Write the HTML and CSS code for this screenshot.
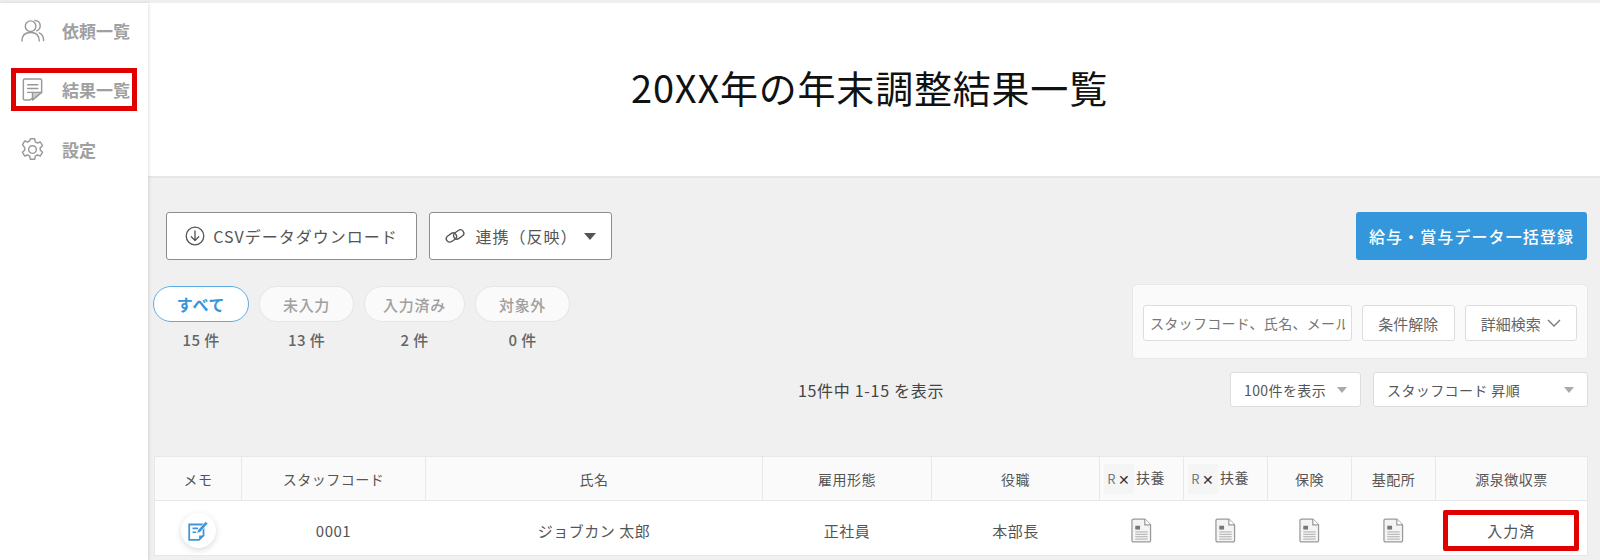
FILE: index.html
```html
<!DOCTYPE html>
<html lang="ja">
<head>
    <meta charset="UTF-8">
    <title>年末調整結果一覧</title>
    <link rel="stylesheet" href="styles.css">
</head>
<body>
    <div class="app">
        <!-- Sidebar -->
        <nav class="sidebar">
            <a class="nav-item">
                <svg class="nav-icon" viewBox="0 0 26 26" fill="none" stroke="#999" stroke-width="1.5" stroke-linecap="round">
                    <circle cx="11" cy="8.5" r="5.5"/>
                    <path d="M2 24c0-6 3.5-9 9-9s9 3 9 9"/>
                    <path d="M15.5 2.5c3.5 0 5.5 2.5 5.5 5.5 0 2.500-1.500 4.500-3.500 5.300"/>
                    <path d="M20 15.500c2.800 1 4.500 4 4.500 8"/>
                </svg>
                <span>依頼一覧</span>
            </a>
            <a class="nav-item nav-marked">
                <svg class="nav-icon" viewBox="0 0 26 26" fill="none" stroke="#999" stroke-width="1.5" stroke-linejoin="round" stroke-linecap="round">
                    <path d="M10 24H5a1.500 1.500 0 0 1-1.500-1.500v-19A1.500 1.500 0 0 1 5 2h16a1.500 1.500 0 0 1 1.500 1.500V16z"/>
                    <path d="M8 8h10.500M8 12h10.500M8 16h5"/>
                    <path d="M22.500 16H13v8z" fill="#ccc"/>
                </svg>
                <span>結果一覧</span>
            </a>
            <a class="nav-item">
                <svg class="nav-icon" viewBox="0 0 26 26" fill="none" stroke="#999" stroke-width="1.500" stroke-linejoin="round">
                    <circle cx="13" cy="13" r="4"/>
                    <path d="M10.800 1.800h4.400l.8 3.300 2 1.100 3.200-1 2.200 3.800-2.400 2.300v2.300l2.400 2.300-2.200 3.800-3.200-1-2 1.100-.8 3.300h-4.400l-.8-3.300-2-1.100-3.200 1-2.200-3.800 2.400-2.300v-2.300L2.600 8 4.800 4.200l3.200 1 2-1.100z"/>
                </svg>
                <span>設定</span>
            </a>
        </nav>

        <main class="main">
            <header class="page-head">
                <h1>20XX年の年末調整結果一覧</h1>
            </header>

            <div class="content">
                <!-- Action buttons -->
                <div class="actions">
                    <button class="btn btn-csv">
                        <svg class="btn-icon" viewBox="0 0 20 20" fill="none" stroke="#555" stroke-width="1.300" stroke-linecap="round" stroke-linejoin="round">
                            <circle cx="10" cy="10" r="8.800"/>
                            <path d="M10 5v9.500M6.300 10.800l3.700 3.700 3.700-3.700"/>
                        </svg>
                        CSVデータダウンロード
                    </button>
                    <button class="btn btn-link">
                        <svg class="btn-icon" viewBox="0 0 22 20" fill="none" stroke="#555" stroke-width="1.500">
                            <rect x="1" y="8" width="12" height="7.500" rx="3.750" transform="rotate(-35 7 11.700)"/>
                            <rect x="9" y="4.500" width="12" height="7.500" rx="3.750" transform="rotate(-35 15 8.200)"/>
                        </svg>
                        連携（反映）
                        <span class="caret caret-dark"></span>
                    </button>
                    <button class="btn-primary">給与・賞与データ一括登録</button>
                </div>

                <!-- Status tabs and search -->
                <div class="filter-row">
                    <ul class="tabs">
                        <li class="tab tab-all">
                            <span class="tab-pill">すべて</span>
                            <span class="tab-count">15 件</span>
                        </li>
                        <li class="tab tab-todo">
                            <span class="tab-pill">未入力</span>
                            <span class="tab-count">13 件</span>
                        </li>
                        <li class="tab tab-done">
                            <span class="tab-pill">入力済み</span>
                            <span class="tab-count">2 件</span>
                        </li>
                        <li class="tab tab-skip">
                            <span class="tab-pill">対象外</span>
                            <span class="tab-count">0 件</span>
                        </li>
                    </ul>
                    <div class="search-panel">
                        <input class="search-input" type="text" placeholder="スタッフコード、氏名、メールアドレス">
                        <button class="btn-small btn-clear">条件解除</button>
                        <button class="btn-small btn-detail">
                            詳細検索
                            <svg class="chevron" viewBox="0 0 14 8" fill="none" stroke="#777" stroke-width="1.300"><path d="M1 1l6 6 6-6"/></svg>
                        </button>
                    </div>
                </div>

                <!-- Paging -->
                <div class="paging-row">
                    <div class="paging-count">15件中 1-15 を表示</div>
                    <div class="paging-selects">
                        <div class="select select-num">100件を表示<span class="caret"></span></div>
                        <div class="select select-sort">スタッフコード 昇順<span class="caret"></span></div>
                    </div>
                </div>

                <!-- Table -->
                <table class="staff-table">
                    <colgroup>
                        <col class="col-memo">
                        <col class="col-code">
                        <col class="col-name">
                        <col class="col-type">
                        <col class="col-post">
                        <col class="col-doc">
                        <col class="col-doc">
                        <col class="col-doc">
                        <col class="col-doc">
                        <col class="col-status">
                    </colgroup>
                    <thead>
                        <tr>
                            <th>メモ</th>
                            <th>スタッフコード</th>
                            <th>氏名</th>
                            <th>雇用形態</th>
                            <th>役職</th>
                            <th class="th-rx"><span class="rx"><i>R</i><b>✕</b></span>扶養</th>
                            <th class="th-rx"><span class="rx"><i>R</i><b>✕</b></span>扶養</th>
                            <th>保険</th>
                            <th>基配所</th>
                            <th>源泉徴収票</th>
                        </tr>
                    </thead>
                    <tbody>
                        <tr>
                            <td>
                                <span class="memo-btn">
                                    <svg viewBox="0 0 20 20" width="22" height="22">
                                        <path d="M2 5h13v10l-4 4H2z" fill="#fff" stroke="#3b97dd" stroke-width="1.600"/>
                                        <path d="M11 19v-4h5z" fill="#3b97dd"/>
                                        <path d="M5 8.500h5M5 12h3.500" stroke="#3b97dd" stroke-width="1.500"/>
                                        <path d="M9 13l.8-3L17 2.200l2 2L12 12z" fill="#3b97dd" stroke="#fff" stroke-width=".6"/>
                                    </svg>
                                </span>
                            </td>
                            <td>0001</td>
                            <td>ジョブカン 太郎</td>
                            <td>正社員</td>
                            <td>本部長</td>
                            <td><svg class="doc" viewBox="0 0 22 26"><use href="#doc-icon"/></svg></td>
                            <td><svg class="doc" viewBox="0 0 22 26"><use href="#doc-icon"/></svg></td>
                            <td><svg class="doc" viewBox="0 0 22 26"><use href="#doc-icon"/></svg></td>
                            <td><svg class="doc" viewBox="0 0 22 26"><use href="#doc-icon"/></svg></td>
                            <td class="status-cell"><span class="status-box">入力済</span></td>
                        </tr>
                    </tbody>
                </table>
            </div>
        </main>
    </div>

    <svg class="defs" width="0" height="0">
        <symbol id="doc-icon" viewBox="0 0 22 26">
            <path d="M2.500 1h12l6 6v16.500a1.500 1.500 0 0 1-1.500 1.500H2.500A1.500 1.500 0 0 1 1 23.500v-21A1.500 1.500 0 0 1 2.500 1z" fill="#f4f4f4" stroke="#999" stroke-width="1.300"/>
            <path d="M14.500 1v6h6" fill="#fff" stroke="#999" stroke-width="1.300"/>
            <rect x="4.500" y="8" width="5" height="4" fill="#777"/>
            <path d="M4.500 14.500h13M4.500 17h13M4.500 19.500h13M4.500 22h13" stroke="#aaa" stroke-width="1"/>
        </symbol>
    </svg>
</body>
</html>
```

FILE: styles.css
```css
* {
    box-sizing: border-box;
}
body {
    margin: 0;
    height: 560px;
    overflow: hidden;
    background-color: #fff;
    font-family: "Noto Sans CJK JP", "Noto Sans", sans-serif;
    color: #555;
}
button {
    font-family: inherit;
}
.defs {
    position: absolute;
}
.app {
    display: flex;
    height: 560px;
    border-top: 3px solid #eee;
}

/* Sidebar */
.sidebar {
    flex: 0 0 148px;
    padding: 6px 11px 0;
    display: flex;
    flex-direction: column;
    gap: 16px;
    background-color: #fff;
    box-shadow: 1px 0 3px rgba(0, 0, 0, 0.12);
    z-index: 1;
}
.nav-item {
    height: 43px;
    display: flex;
    align-items: center;
    gap: 17px;
    padding-left: 9px;
    font-size: 17px;
    font-weight: 700;
    color: #a0a0a0;
    white-space: nowrap;
}
.nav-marked {
    outline: 5px solid #e00000;
    outline-offset: -5px;
    margin-bottom: 1px;
}
.nav-icon {
    width: 25px;
    height: 25px;
    flex: none;
}

/* Main */
.main {
    flex: 1;
    display: flex;
    flex-direction: column;
}
.page-head {
    height: 175px;
    display: flex;
    justify-content: center;
    align-items: center;
    border-bottom: 2px solid #e6e6e6;
    padding-bottom: 6px;
}
h1 {
    margin: 0 0 0 -10px;
    font-size: 38px;
    font-weight: 400;
    letter-spacing: .8px;
    color: #111;
    font-family: "Noto Sans CJK JP", sans-serif;
}
.content {
    flex: 1;
    background-color: #f0f0f0;
    padding: 34px 13px 0 6px;
}

/* Action buttons */
.actions {
    display: flex;
    gap: 12px;
    margin-left: 12px;
    height: 48px;
}
.btn {
    height: 48px;
    display: flex;
    align-items: center;
    justify-content: center;
    background-color: #fff;
    border: 1px solid #8c8c8c;
    border-radius: 3px;
    font-size: 16px;
    letter-spacing: 1px;
    color: #555;
    padding: 0;
}
.btn-csv {
    width: 251px;
    gap: 8px;
}
.btn-link {
    width: 183px;
    gap: 10px;
}
.btn-link .caret {
    margin-left: -4px;
}
.btn-icon {
    width: 20px;
    height: 20px;
    flex: none;
}
.btn-primary {
    margin-left: auto;
    margin-right: 1px;
    width: 231px;
    height: 48px;
    background-color: #3497db;
    border: none;
    border-radius: 3px;
    color: #fff;
    font-size: 16px;
    font-weight: 500;
    letter-spacing: 1.1px;
}
.caret {
    display: inline-block;
    width: 0;
    height: 0;
    border-left: 5px solid transparent;
    border-right: 5px solid transparent;
    border-top: 6px solid #aaa;
}
.caret-dark {
    border-left-width: 6px;
    border-right-width: 6px;
    border-top: 7px solid #555;
}

/* Tabs and search */
.filter-row {
    display: flex;
    justify-content: space-between;
    align-items: flex-start;
    margin-top: 24px;
}
.tabs {
    list-style: none;
    margin: 2px 0 0 -1px;
    padding: 0;
    display: flex;
    gap: 10px;
}
.tab {
    display: flex;
    flex-direction: column;
    align-items: center;
    gap: 8px;
}
.tab-pill {
    height: 36px;
    display: flex;
    align-items: center;
    justify-content: center;
    background-color: #fafafa;
    border: 1px solid #e6e6e6;
    border-radius: 18px;
    font-size: 15px;
    font-weight: 500;
    letter-spacing: .7px;
    color: #a0a0a0;
}
.tab-all .tab-pill {
    width: 96px;
    background-color: #fff;
    border-color: #5aaee8;
    color: #3497db;
    font-weight: 700;
    font-size: 16px;
}
.tab-todo .tab-pill {
    width: 95px;
}
.tab-done .tab-pill {
    width: 101px;
}
.tab-skip .tab-pill {
    width: 95px;
}
.tab-count {
    font-size: 15px;
    font-weight: 500;
    letter-spacing: .4px;
    color: #666;
    line-height: 20px;
}
.search-panel {
    width: 456px;
    height: 75px;
    padding: 20px 10px 0;
    display: flex;
    gap: 10px;
    background-color: #fafafa;
    border: 1px solid #e8e8e8;
    border-radius: 4px;
}
.search-input {
    width: 209px;
    height: 36px;
    padding: 0 6px;
    flex: none;
    font-family: inherit;
    font-size: 14px;
    letter-spacing: .3px;
    background-color: #fff;
    border: 1px solid #ddd;
    border-radius: 3px;
}
.search-input::placeholder {
    color: #777;
    opacity: 1;
}
.btn-small {
    height: 36px;
    padding: 0;
    display: flex;
    align-items: center;
    justify-content: center;
    gap: 6px;
    background-color: #fff;
    border: 1px solid #ddd;
    border-radius: 3px;
    font-size: 15px;
    color: #666;
}
.btn-clear {
    width: 93px;
}
.btn-detail {
    width: 113px;
}
.chevron {
    width: 14px;
    height: 8px;
}

/* Paging */
.paging-row {
    display: grid;
    grid-template-columns: 1fr auto 1fr;
    align-items: center;
    margin-top: 13px;
}
.paging-count {
    grid-column: 2;
    font-size: 16px;
    letter-spacing: .7px;
    color: #444;
}
.paging-selects {
    grid-column: 3;
    display: flex;
    justify-content: flex-end;
    gap: 12px;
}
.select {
    height: 35px;
    display: flex;
    align-items: center;
    justify-content: space-between;
    padding: 0 13px;
    background-color: #fff;
    border: 1px solid #ddd;
    border-radius: 3px;
    font-size: 14px;
    letter-spacing: .4px;
    color: #555;
}
.select-num {
    width: 131px;
}
.select-sort {
    width: 215px;
}

/* Table */
.staff-table {
    width: 1433px;
    margin-top: 49px;
    table-layout: fixed;
    border-collapse: collapse;
    background-color: #fff;
}
.col-memo {
    width: 87px;
}
.col-code {
    width: 184px;
}
.col-name {
    width: 337px;
}
.col-type {
    width: 169px;
}
.col-post {
    width: 168px;
}
.col-doc {
    width: 84px;
}
.col-status {
    width: 152px;
}
th, td {
    border: 1px solid #e8e8e8;
    text-align: center;
    padding: 0;
    letter-spacing: .5px;
    color: #555;
}
th {
    height: 44px;
    background-color: #fafafa;
    font-size: 14px;
    font-weight: 400;
}
td {
    height: 55px;
    padding-top: 4px;
    font-size: 15px;
    border-left: none;
    border-right: none;
}
tr td:first-child {
    border-left: 1px solid #e8e8e8;
}
tr td:last-child {
    border-right: 1px solid #e8e8e8;
}
.th-rx {
    padding-right: 14px;
}
.rx {
    display: inline-flex;
    align-items: center;
    justify-content: center;
    gap: 2px;
    width: 30px;
    height: 30px;
    margin-right: 2px;
    background-color: #f5f5f5;
    vertical-align: middle;
}
.rx i {
    font-style: normal;
    font-size: 13px;
    color: #777;
}
.rx b {
    font-size: 14px;
    font-weight: 400;
    color: #333;
}
.memo-btn {
    width: 35px;
    height: 35px;
    display: inline-flex;
    align-items: center;
    justify-content: center;
    background-color: #fff;
    border-radius: 50%;
    box-shadow: 0 2px 6px rgba(0, 0, 0, 0.15);
    vertical-align: middle;
}
.doc {
    width: 21px;
    height: 25px;
    vertical-align: middle;
}
.status-box {
    width: 136px;
    height: 41px;
    display: inline-flex;
    align-items: center;
    justify-content: center;
    border: 5px solid #e00000;
    border-radius: 2px;
    font-size: 15px;
    letter-spacing: 1px;
    vertical-align: middle;
}
```
